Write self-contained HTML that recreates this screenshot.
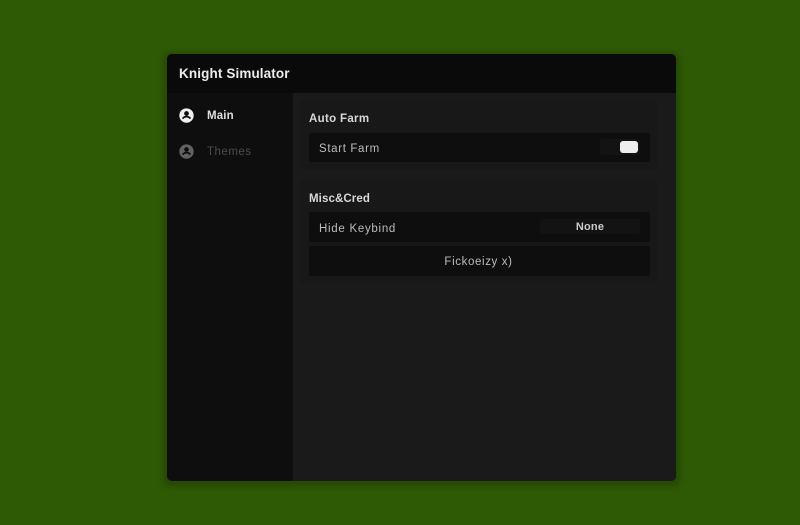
<!DOCTYPE html>
<html>
<head>
<meta charset="utf-8">
<style>
html,body{margin:0;padding:0;width:800px;height:525px;overflow:hidden;background:#2f5a05;font-family:"Liberation Sans",sans-serif}
div{position:absolute;box-sizing:border-box}
.t{white-space:nowrap;line-height:16px;height:16px}
#shadow{left:163px;top:52px;width:517px;height:435px;background:rgba(20,40,0,.35);border-radius:8px;filter:blur(3px)}
#win{left:167px;top:54px;width:509px;height:427px;background:#0e0e0e;border-radius:5px;overflow:hidden;filter:blur(.35px)}
#head{left:0;top:0;width:509px;height:39px;background:#0a0a0a}
#main{left:126px;top:39px;width:383px;height:388px;background:#1a1a1a}
.sec{background:#181818;border-radius:3px}
.row{background:#0e0e0e;border-radius:2px}
svg{position:absolute}
</style>
</head>
<body>
<div id="shadow"></div>
<div id="win">
  <div id="head"></div>
  <div id="main"></div>
  <div class="t" style="left:12px;top:12px;font-size:13.5px;font-weight:bold;color:#ececec;letter-spacing:.12px">Knight Simulator</div>

  <svg style="left:12px;top:54px" width="15" height="15" viewBox="0 0 24 24"><circle cx="12" cy="12" r="11.500" fill="#f0f0f0"/><circle cx="12" cy="8.800" r="3.800" fill="#0e0e0e"/><path d="M5.800 17c1.500-2.300 3.800-3.200 6.200-3.200s4.700 .9 6.200 3.200" fill="none" stroke="#0e0e0e" stroke-width="2.800"/></svg>
  <div class="t" style="left:40px;top:54px;font-size:11.500px;font-weight:bold;color:#dedede;letter-spacing:.15px">Main</div>

  <svg style="left:12px;top:90px" width="15" height="15" viewBox="0 0 24 24"><circle cx="12" cy="12" r="11.500" fill="#626262"/><circle cx="12" cy="8.800" r="3.800" fill="#0e0e0e"/><path d="M5.800 17c1.500-2.300 3.800-3.200 6.200-3.200s4.700 .9 6.200 3.200" fill="none" stroke="#0e0e0e" stroke-width="2.800"/></svg>
  <div class="t" style="left:40px;top:90px;font-size:11.500px;color:#4c4c4c;letter-spacing:.5px">Themes</div>

  <div class="sec" style="left:133px;top:46px;width:358px;height:70px"></div>
  <div class="t" style="left:142px;top:57px;font-size:11.500px;font-weight:bold;color:#d8d8d8;letter-spacing:.32px">Auto Farm</div>
  <div class="row" style="left:142px;top:79px;width:341px;height:29px"></div>
  <div class="t" style="left:152px;top:87px;font-size:11.500px;color:#bcbcbc;letter-spacing:.65px">Start Farm</div>
  <div style="left:433px;top:85px;width:40px;height:16px;background:#131313;border-radius:3px"></div>
  <div style="left:453px;top:87px;width:18px;height:12px;background:#eeeeee;border-radius:3px"></div>

  <div class="sec" style="left:133px;top:126px;width:358px;height:103px"></div>
  <div class="t" style="left:142px;top:137px;font-size:11.500px;font-weight:bold;color:#d8d8d8;letter-spacing:.1px">Misc&amp;Cred</div>
  <div class="row" style="left:142px;top:158px;width:341px;height:30px"></div>
  <div class="t" style="left:152px;top:167px;font-size:11.500px;color:#bcbcbc;letter-spacing:.72px">Hide Keybind</div>
  <div style="left:373px;top:165px;width:100px;height:15px;background:#131313;border-radius:2px"></div>
  <div class="t" style="left:373px;top:165px;width:100px;text-align:center;font-size:11px;font-weight:bold;color:#cccccc;letter-spacing:.2px">None</div>
  <div class="row" style="left:142px;top:192px;width:341px;height:30px"></div>
  <div class="t" style="left:141px;top:200px;width:341px;text-align:center;font-size:11.500px;color:#bcbcbc;letter-spacing:.62px">Fickoeizy x)</div>
</div>
</body>
</html>
